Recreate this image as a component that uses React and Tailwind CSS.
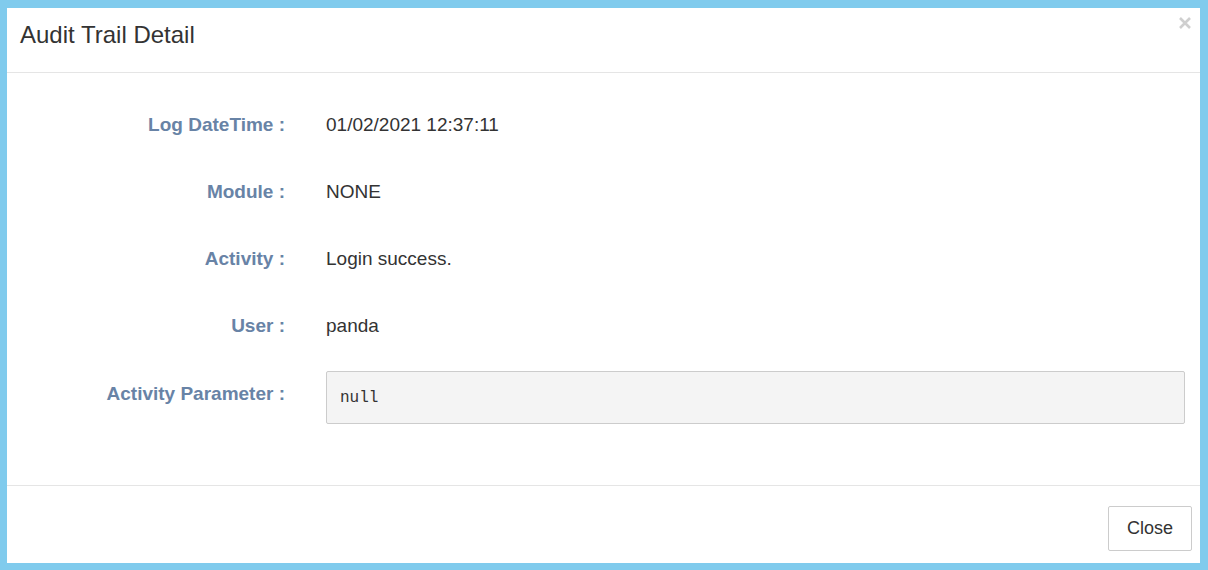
import React from 'react';

const rows = [
  { label: 'Log DateTime :', value: '01/02/2021 12:37:11' },
  { label: 'Module :', value: 'NONE' },
  { label: 'Activity :', value: 'Login success.' },
  { label: 'User :', value: 'panda' },
];

function App() {
  return (
    <div className="h-[570px] w-[1208px] bg-[#80cbed] pt-[8px] pb-[7px] pl-[7px] pr-[8px] font-['Liberation_Sans',Arial,sans-serif]">
      <div className="flex h-full flex-col bg-white">
        {/* header */}
        <div className="flex h-[65px] items-start justify-between border-b border-[#e5e5e5] pl-[13px] pr-[9px]">
          <h4 className="pt-[12px] text-[24px] leading-[30px] text-[#333]">Audit Trail Detail</h4>
          <button className="mt-[9px] p-0">
            <svg width="12" height="12" viewBox="0 0 12 12" className="text-[#cfcfcf]">
              <path d="M1 1 L11 11 M11 1 L1 11" stroke="currentColor" strokeWidth="2.6" />
            </svg>
          </button>
        </div>

        {/* body */}
        <div className="flex flex-1 flex-col gap-[15px] pt-[26px]">
          {rows.map((row) => (
            <div key={row.label} className="flex h-[52px] items-center">
              <div className="w-[278px] text-right text-[19px] font-bold text-[#6883a6]">{row.label}</div>
              <div className="pl-[41px] text-[19px] text-[#333]">{row.value}</div>
            </div>
          ))}
          <div className="flex items-start">
            <div className="w-[278px] pt-[17px] text-right text-[19px] leading-[20px] font-bold text-[#6883a6]">
              Activity Parameter :
            </div>
            <div className="ml-[41px] mr-[15px] mt-[4px] flex h-[53px] flex-1 items-center rounded-[2px] border border-[#cccccc] bg-[#f4f4f4] px-[13px]">
              <pre className="font-['Liberation_Mono',monospace] text-[16px] text-[#333]">null</pre>
            </div>
          </div>
        </div>

        {/* footer */}
        <div className="flex h-[78px] items-start justify-end border-t border-[#e5e5e5] pt-[20px] pr-[8px]">
          <button className="h-[45px] w-[84px] rounded-[2px] border border-[#cccccc] bg-white text-[18px] text-[#333]">
            Close
          </button>
        </div>
      </div>
    </div>
  );
}

export default App;
